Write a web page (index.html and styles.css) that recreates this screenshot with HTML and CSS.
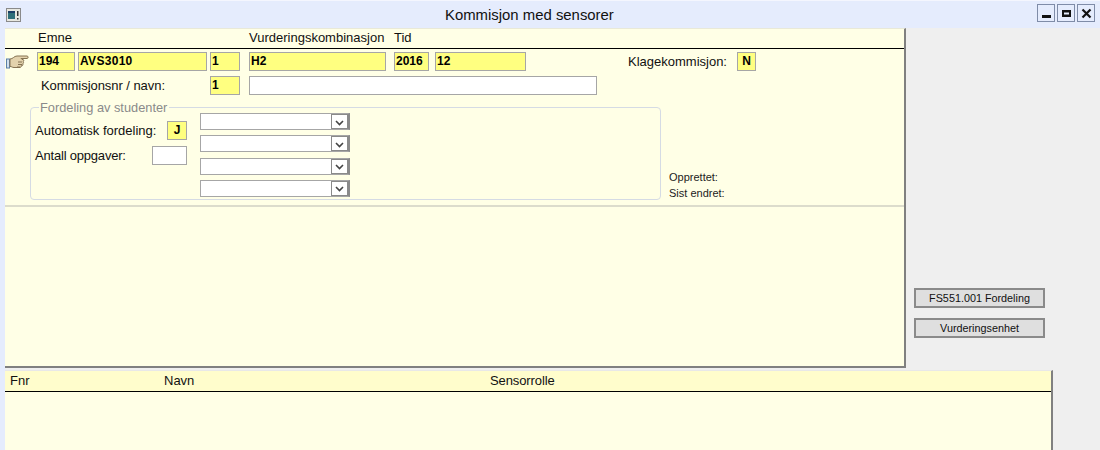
FILE: index.html
```html
<!DOCTYPE html>
<html lang="no">
<head>
<meta charset="utf-8">
<title>Kommisjon med sensorer</title>
<link rel="stylesheet" href="styles.css">
</head>
<body>
<header class="titlebar">
  <svg class="appicon" width="15" height="14" viewBox="0 0 15 14">
    <rect x="0.5" y="0.5" width="14" height="13" fill="#e8e8e0" stroke="#8a8a8a"/>
    <rect x="2" y="3" width="7" height="8" fill="#2f6f78"/>
    <rect x="2" y="3" width="7" height="2" fill="#1c3f66"/>
    <rect x="11" y="3" width="1.5" height="5" fill="#333"/>
    <rect x="11" y="10" width="1.5" height="1.5" fill="#333"/>
  </svg>
  <div class="title">Kommisjon med sensorer</div>
  <div class="winbtns">
    <button class="winbtn"><svg width="11" height="11" viewBox="0 0 11 11"><rect x="1" y="7" width="9" height="3" fill="#111"/></svg></button>
    <button class="winbtn"><svg width="11" height="11" viewBox="0 0 11 11"><path d="M1 2h9v7H1z M3 4.500v2h5v-2z" fill="#111" fill-rule="evenodd"/></svg></button>
    <button class="winbtn"><svg width="11" height="11" viewBox="0 0 11 11"><path d="M1.500 1.500L9.500 9.500M9.500 1.500L1.500 9.500" stroke="#111" stroke-width="2.200"/></svg></button>
  </div>
</header>

<main class="main">
  <div class="toprow">
    <section class="panel">
      <div class="head">
        <span class="h-emne">Emne</span>
        <span class="h-vurd">Vurderingskombinasjon</span>
        <span class="h-tid">Tid</span>
      </div>

      <div class="row1">
        <svg class="hand" width="23" height="16" viewBox="0 0 23 16">
          <rect x="0.500" y="5" width="3" height="9" fill="#cfe0f0" stroke="#5a7fa8"/>
          <path d="M4 5c3 0 4-3 7-3h10c1.500 0 1.500 2.500 0 2.500h-6l1 1h1c1 0 1 2 0 2.200 .8 .3 .6 2-.3 2.100 .5 .5 .2 1.900-.7 2h-1c.4 .6 0 1.700-1 1.700H8c-2 0-2-1-4-1z" fill="#e3d2ac" stroke="#857352"/>
          <path d="M12 8h4M12 10.500h4M11 13h3" stroke="#857352" fill="none"/>
        </svg>
        <div class="f req w38">194</div>
        <div class="f req w129">AVS3010</div>
        <div class="f req w30">1</div>
        <div class="f req w137">H2</div>
        <div class="f req w35">2016</div>
        <div class="f req w91">12</div>
        <span class="lbl klage">Klagekommisjon:</span>
        <div class="f req w19 center">N</div>
      </div>

      <div class="row2">
        <span class="lbl knr">Kommisjonsnr / navn:</span>
        <div class="f req w30">1</div>
        <div class="f blank w348"></div>
      </div>

      <div class="row3">
        <div class="group">
          <span class="legend">Fordeling av studenter</span>
          <div class="gleft">
            <div class="grow">
              <span class="lbl">Automatisk fordeling:</span>
              <div class="f req w20 center">J</div>
            </div>
            <div class="grow">
              <span class="lbl tight">Antall oppgaver:</span>
              <div class="f blank w35"></div>
            </div>
          </div>
          <div class="gright">
            <div class="sel"><span class="arrow"><svg width="9" height="6" viewBox="0 0 9 6"><path d="M1 1l3.500 3.500L8 1" stroke="#444" stroke-width="1.600" fill="none"/></svg></span></div>
            <div class="sel"><span class="arrow"><svg width="9" height="6" viewBox="0 0 9 6"><path d="M1 1l3.500 3.500L8 1" stroke="#444" stroke-width="1.600" fill="none"/></svg></span></div>
            <div class="sel"><span class="arrow"><svg width="9" height="6" viewBox="0 0 9 6"><path d="M1 1l3.500 3.500L8 1" stroke="#444" stroke-width="1.600" fill="none"/></svg></span></div>
            <div class="sel"><span class="arrow"><svg width="9" height="6" viewBox="0 0 9 6"><path d="M1 1l3.500 3.500L8 1" stroke="#444" stroke-width="1.600" fill="none"/></svg></span></div>
          </div>
        </div>
        <div class="meta">
          <span>Opprettet:</span>
          <span>Sist endret:</span>
        </div>
      </div>
      <div class="sep"></div>
    </section>
    <aside class="side">
      <button class="btn">FS551.001 Fordeling</button>
      <button class="btn">Vurderingsenhet</button>
    </aside>
  </div>

  <section class="lower">
    <div class="lhead">
      <span class="c-fnr">Fnr</span>
      <span class="c-navn">Navn</span>
      <span class="c-rolle">Sensorrolle</span>
    </div>
  </section>
</main>
</body>
</html>
```
FILE: styles.css
```css
* { box-sizing: border-box; }
html, body { margin: 0; padding: 0; }
body {
  width: 1100px;
  height: 450px;
  overflow: hidden;
  background: #efefef;
  font: 13px "Liberation Sans", Arial, sans-serif;
  color: #111;
}
.titlebar {
  height: 28px;
  background: #e5ecfd;
  border-top: 1px solid #f4f6fe;
  display: flex;
  align-items: center;
  position: relative;
}
.appicon { margin-left: 6px; }
.title {
  position: absolute;
  left: 445px;
  top: 6px;
  font-size: 14.900px;
  line-height: 17px;
}
.winbtns { margin-left: auto; margin-right: 5px; display: flex; gap: 2px; margin-top: -3px; }
.winbtn {
  width: 18px;
  height: 18px;
  padding: 0;
  background: #e5ecfd;
  border: 1px solid #7f8ca8;
  display: flex;
  align-items: center;
  justify-content: center;
}
.main {
  padding-left: 5px;
  background: linear-gradient(to right, #e5ecfd 5px, #efefef 5px);
  height: 422px;
}
.toprow { display: flex; height: 340px; }
.panel {
  width: 901px;
  height: 340px;
  background: #ffffe6;
  border-top: 1px solid #e9e9d8;
  border-right: 2px solid #808080;
  border-bottom: 2px solid #808080;
}
.head {
  height: 20px;
  border-bottom: 1px solid #000;
  display: flex;
  line-height: 18px;
}
.h-emne { margin-left: 33px; width: 211px; }
.h-vurd { width: 145px; }
.row1 { display: flex; align-items: flex-start; margin-top: 3px; height: 19px; }
.hand { margin-left: 1px; margin-top: 2px; margin-right: 8px; flex: none; }
.f {
  height: 19px;
  border: 1px solid #a6a6a6;
  font-size: 12px;
  font-weight: bold;
  line-height: 16px;
  padding-left: 1px;
  margin-right: 3px;
  flex: none;
  color: #000;
}
.req { background: #ffff80; }
.blank { background: #fff; }
.center { text-align: center; padding-left: 0; }
.w19 { width: 19px; }
.w20 { width: 20px; margin-right: 0; }
.w30 { width: 30px; margin-right: 9px; }
.w35 { width: 35px; margin-right: 6px; }
.w38 { width: 38px; }
.w91 { width: 91px; margin-right: 0; }
.w129 { width: 129px; letter-spacing: 0.3px; }
.w137 { width: 137px; margin-right: 8px; }
.w348 { width: 348px; margin-right: 0; }
.lbl { line-height: 20px; }
.tight { letter-spacing: -0.2px; }
.klage { margin-left: 102px; margin-right: 10px; flex: none; }
.row2 { display: flex; margin-top: 5px; height: 19px; }
.knr { margin-left: 36px; width: 169px; letter-spacing: -0.05px; }
.row3 { display: flex; margin-top: 12px; }
.group {
  position: relative;
  margin-left: 25px;
  width: 631px;
  height: 93px;
  border: 1px solid #d5dbe4;
  border-radius: 4px;
  display: flex;
  padding-left: 4px;
}
.legend {
  position: absolute;
  left: 8px;
  top: -7px;
  padding: 0 2px 0 1px;
  background: #ffffe6;
  color: #8a8a8a;
  font-size: 12.800px;
  line-height: 14px;
}
.gleft {
  width: 152px;
  padding-top: 13px;
  display: flex;
  flex-direction: column;
  gap: 6px;
}
.grow { display: flex; justify-content: space-between; height: 19px; }
.grow .f { margin-right: 0; }
.gright {
  margin-left: 13px;
  padding-top: 5px;
  display: flex;
  flex-direction: column;
  gap: 5.330px;
}
.sel {
  width: 150px;
  height: 17px;
  background: #fff;
  border: 1px solid #a6a6a6;
  border-right: 2px solid #8a8a8a;
  display: flex;
  justify-content: flex-end;
}
.arrow {
  width: 17px;
  height: 15px;
  border: 1px solid #8a8a8a;
  background: #fff;
  display: flex;
  align-items: center;
  justify-content: center;
  padding-top: 2px;
}
.meta {
  margin-left: 8px;
  margin-bottom: -1px;
  align-self: flex-end;
  display: flex;
  flex-direction: column;
  font-size: 11px;
  line-height: 16px;
  color: #222;
}
.sep { margin-top: 5px; height: 2px; background: #dcdccc; }
.side {
  margin-left: 8px;
  padding-top: 260px;
  display: flex;
  flex-direction: column;
  gap: 10px;
}
.btn {
  width: 131px;
  height: 20px;
  padding: 0;
  background: #dfdfdf;
  border: 2px solid #8a8a8a;
  font: 10.800px "Liberation Sans", Arial, sans-serif;
  color: #111;
}
.lower {
  width: 1048px;
  height: 80px;
  margin-top: 2px;
  background: #ffffe6;
  border-top: 1px solid #e8e8e8;
  border-right: 2px solid #808080;
}
.lhead {
  height: 21px;
  background: #fffdcc;
  border-bottom: 1px solid #000;
  display: flex;
  line-height: 20px;
}
.c-fnr { margin-left: 5px; width: 154px; }
.c-navn { width: 326px; letter-spacing: 0; }
.c-rolle { letter-spacing: -0.1px; }
```
